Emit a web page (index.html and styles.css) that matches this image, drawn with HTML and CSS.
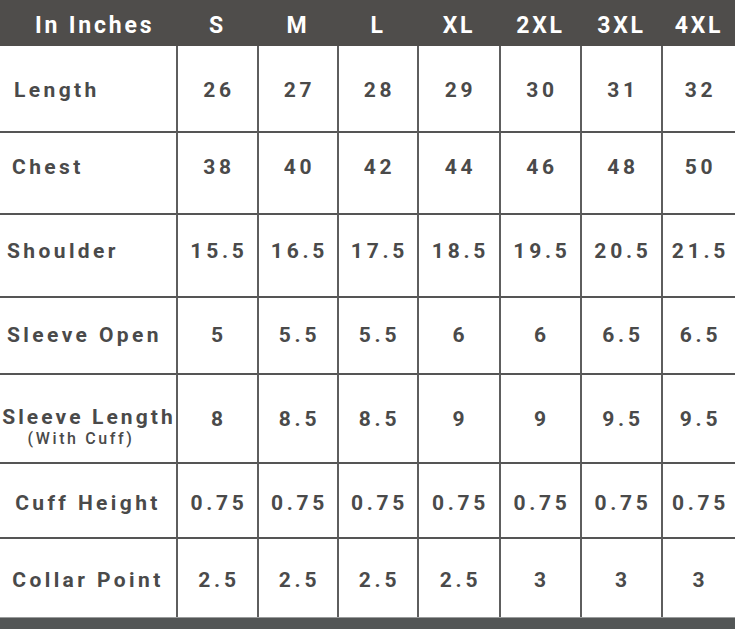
FILE: index.html
```html
<!DOCTYPE html>
<html lang="en">
<head>
<meta charset="utf-8">
<title>Size Chart</title>
<link rel="stylesheet" href="styles.css">
</head>
<body>
<div class="chart">
  <div class="hd hd-label">In Inches</div>
  <div class="hd">S</div>
  <div class="hd">M</div>
  <div class="hd">L</div>
  <div class="hd">XL</div>
  <div class="hd">2XL</div>
  <div class="hd">3XL</div>
  <div class="hd">4XL</div>

  <div class="c lbl lbl-l1 first">Length</div>
  <div class="c v first">26</div><div class="c v first">27</div><div class="c v first">28</div><div class="c v first">29</div><div class="c v first">30</div><div class="c v first">31</div><div class="c v first">32</div>

  <div class="c lbl lbl-l2 up">Chest</div>
  <div class="c v up">38</div><div class="c v up">40</div><div class="c v up">42</div><div class="c v up">44</div><div class="c v up">46</div><div class="c v up">48</div><div class="c v up">50</div>

  <div class="c lbl lbl-l3 up2">Shoulder</div>
  <div class="c v up2">15.5</div><div class="c v up2">16.5</div><div class="c v up2">17.5</div><div class="c v up2">18.5</div><div class="c v up2">19.5</div><div class="c v up2">20.5</div><div class="c v up2">21.5</div>

  <div class="c lbl lbl-l3 up3">Sleeve Open</div>
  <div class="c v up3">5</div><div class="c v up3">5.5</div><div class="c v up3">5.5</div><div class="c v up3">6</div><div class="c v up3">6</div><div class="c v up3">6.5</div><div class="c v up3">6.5</div>

  <div class="c lbl lbl-c stack"><span>Sleeve Length</span><span class="sub">(With Cuff)</span></div>
  <div class="c v">8</div><div class="c v">8.5</div><div class="c v">8.5</div><div class="c v">9</div><div class="c v">9</div><div class="c v">9.5</div><div class="c v">9.5</div>

  <div class="c lbl lbl-c down">Cuff Height</div>
  <div class="c v tight down">0.75</div><div class="c v tight down">0.75</div><div class="c v tight down">0.75</div><div class="c v tight down">0.75</div><div class="c v tight down">0.75</div><div class="c v tight down">0.75</div><div class="c v tight down">0.75</div>

  <div class="c lbl lbl-c down">Collar Point</div>
  <div class="c v down">2.5</div><div class="c v down">2.5</div><div class="c v down">2.5</div><div class="c v down">2.5</div><div class="c v down">3</div><div class="c v down">3</div><div class="c v down">3</div>

  <div class="foot"></div>
</div>
</body>
</html>
```

FILE: styles.css
```css
* { box-sizing: border-box; }
html, body { margin: 0; padding: 0; background: #ffffff; }
body { width: 735px; height: 629px; overflow: hidden; }

.chart {
  display: grid;
  grid-template-columns: 176px 81px 80px 80px 82px 81px 81px 74px;
  grid-template-rows: 46px 85px 82px 83px 77px 89px 75px 80px 12px;
  font-family: Roboto, "Liberation Sans", sans-serif;
  font-weight: 700;
  color: #4a4a4a;
}

.hd {
  background: #4f4d4b;
  color: #ffffff;
  font-size: 23px;
  letter-spacing: 2.8px;
  display: flex;
  align-items: center;
  justify-content: center;
  padding-top: 4px;
  padding-left: 2px;
}
.hd-label { justify-content: flex-start; padding-left: 35px; }
.hd:last-of-type { border-top-right-radius: 4px; }

.c {
  border-top: 2px solid #555555;
  border-left: 2px solid #5e5e5e;
  display: flex;
  align-items: center;
  justify-content: center;
  font-size: 21px;
  letter-spacing: 3.8px;
  white-space: nowrap;
}
.c.first { border-top: none; padding-top: 2px; }
.c.up { padding-bottom: 12px; }
.c.up2 { padding-bottom: 9px; }
.c.up3 { padding-bottom: 2px; }
.c.down { padding-top: 4px; }
.lbl { border-left: none; letter-spacing: 3.4px; }
.v { padding-left: 3px; }
.v.tight { letter-spacing: 3.7px; }
.lbl-l1 { justify-content: flex-start; padding-left: 14px; }
.lbl-l2 { justify-content: flex-start; padding-left: 12px; }
.lbl-l3 { justify-content: flex-start; padding-left: 7px; }
.lbl-c { justify-content: center; }
.stack { flex-direction: column; padding-top: 16px; line-height: 1.15; letter-spacing: 3.1px; padding-left: 2px; }
.sub { font-size: 16px; font-weight: 500; letter-spacing: 2.6px; margin-top: 1px; margin-right: 16px; }

.foot {
  grid-column: 1 / -1;
  background: #535656;
  border-top: 1px solid #9a9c9c;
}
```
